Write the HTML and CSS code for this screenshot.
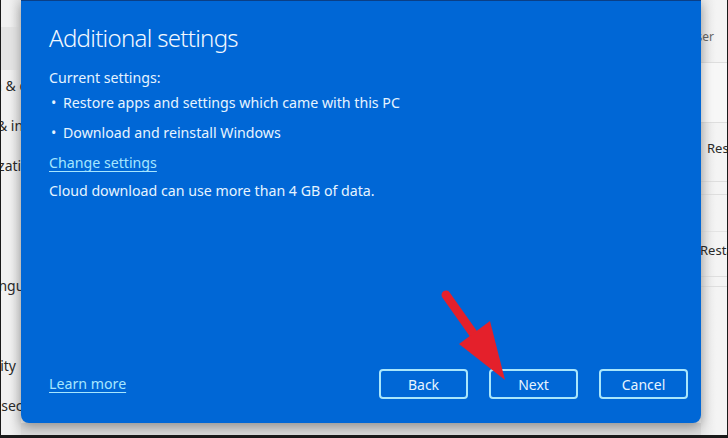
FILE: index.html
```html
<!DOCTYPE html>
<html>
<head>
    <link rel="stylesheet" href="styles.css">
</head>
<body>
    <div class="screen">
        <div class="sidebar">
            <div class="nav-list">
                <div class="nav-top"></div>
                <div class="nav-search"></div>
                <div class="nav-item">Bluetooth &amp; devices</div>
                <div class="nav-item">Network &amp; internet</div>
                <div class="nav-item">Personalization</div>
                <div class="nav-item">Apps</div>
                <div class="nav-item">Accounts</div>
                <div class="nav-item">Time &amp; language</div>
                <div class="nav-item">Gaming</div>
                <div class="nav-item">Accessibility</div>
                <div class="nav-item">Privacy &amp; security</div>
            </div>
        </div>

        <div class="dialog">
            <h1 class="dialog-title">Additional settings</h1>
            <p class="line line-first">Current settings:</p>
            <ul class="settings-list">
                <li>Restore apps and settings which came with this PC</li>
                <li>Download and reinstall Windows</li>
            </ul>
            <a class="link change-link" href="#">Change settings</a>
            <p class="line line-note">Cloud download can use more than 4 GB of data.</p>

            <div class="dialog-footer">
                <a class="link" href="#">Learn more</a>
                <div class="footer-buttons">
                    <button class="dlg-btn">Back</button>
                    <button class="dlg-btn">Next</button>
                    <button class="dlg-btn">Cancel</button>
                </div>
            </div>

            <!-- red pointer drawn over the Next button -->
            <svg class="pointer" width="680" height="423" viewBox="21 0 680 423">
                <line x1="446" y1="295" x2="475" y2="336" stroke="#e4202b" stroke-width="9" stroke-linecap="round"/>
                <polygon points="459,344 490,321 505,380" fill="#e4202b"/>
            </svg>
        </div>

        <div class="gutter"></div>

        <div class="page">
            <div class="page-row row-head"><span class="clip-text">Power user</span></div>
            <div class="page-row row-a"></div>
            <div class="page-row row-b"><span class="page-btn">Reset PC</span></div>
            <div class="page-row row-c"></div>
            <div class="page-row row-d"><span class="page-btn restart">Restart now</span></div>
            <div class="page-row row-e"></div>
        </div>
    </div>
</body>
</html>
```

FILE: styles.css
```css
html, body {
    margin: 0;
    padding: 0;
}

body {
    font-family: "Noto Sans", "Open Sans", sans-serif;
    background: #000;
}

.screen {
    width: 728px;
    height: 438px;
    box-sizing: border-box;
    border-left: 1px solid #1a1a1a;
    border-right: 1px solid #1a1a1a;
    border-bottom: 3px solid #1a1a1a;
    background: #f0f0f0;
    display: grid;
    grid-template-columns: 20px 680px 1fr;
    grid-template-rows: 423px 1fr;
    overflow: hidden;
}

/* settings window behind the dialog */
.sidebar {
    grid-row: 1 / 3;
    grid-column: 1;
    overflow: hidden;
    background: linear-gradient(to right, #f1f1f1 40%, #e2e2e2);
}

.nav-list {
    margin-left: -64px;
    width: 200px;
    font-size: 14px;
    color: #2a2a2a;
}

.nav-top {
    height: 27px;
}

.nav-search {
    height: 43px;
    background: #e4e4e4;
}

.nav-item {
    height: 40px;
    line-height: 32px;
    white-space: nowrap;
}

.gutter {
    grid-row: 2;
    grid-column: 2;
    background: #dcdcdc;
}

.page {
    grid-row: 1 / 3;
    grid-column: 3;
    overflow: hidden;
    background: linear-gradient(to right, #e6e6e6, #f4f4f4 60%);
    font-size: 13px;
    color: #2a2a2a;
}

.page-row {
    box-sizing: border-box;
    border-bottom: 1px solid #dedede;
    display: flex;
    align-items: center;
    white-space: nowrap;
}

.row-head {
    height: 63px;
    justify-content: flex-end;
    align-items: flex-start;
    padding-top: 28px;
    padding-right: 13px;
    color: #666;
    font-size: 12px;
}

.row-a {
    height: 60px;
    background: #f7f7f7;
}

.row-b {
    height: 59px;
    padding-left: 6px;
    padding-bottom: 8px;
}

.row-c {
    height: 38px;
    margin-top: 12px;
    border-top: 1px solid #dedede;
    border-bottom: 1px solid #e4e4e4;
}

.row-d {
    height: 45px;
    padding-bottom: 8px;
}

.row-e {
    height: 10px;
}

.page-btn.restart {
    margin-left: -1px;
}

/* dialog */
.dialog {
    grid-row: 1;
    grid-column: 2;
    position: relative;
    background: #0067d6;
    border-top: 1px solid #0a3f86;
    border-radius: 0 0 8px 8px;
    box-shadow: 0 4px 12px rgba(0, 0, 0, 0.35);
    box-sizing: border-box;
    padding: 19px 13px 24px 28px;
    display: flex;
    flex-direction: column;
    color: #e6f4ff;
    font-size: 14.2px;
    z-index: 1;
}

.dialog-title {
    margin: 0;
    font-size: 24px;
    font-weight: 300;
    letter-spacing: -0.7px;
    line-height: 36px;
    color: #f2f8ff;
}

.line {
    margin: 0;
    line-height: 20px;
}

.line-first {
    margin-top: 12px;
}

.settings-list {
    list-style: none;
    margin: 5px 0 0;
    padding: 0;
}

.settings-list li {
    line-height: 20px;
    margin-bottom: 10px;
    padding-left: 14px;
    position: relative;
}

.settings-list li::before {
    content: "\2022";
    position: absolute;
    left: 2px;
}

.link {
    color: #a6e6ff;
    text-decoration: underline;
    text-underline-offset: 3px;
    line-height: 20px;
}

.change-link {
    align-self: flex-start;
}

.line-note {
    margin-top: 8px;
}

.dialog-footer {
    margin-top: auto;
    display: flex;
    align-items: center;
    justify-content: space-between;
}

.footer-buttons {
    display: flex;
    gap: 21px;
}

.dlg-btn {
    width: 89px;
    height: 30px;
    background: transparent;
    border: 2px solid #a9e6fb;
    border-radius: 4px;
    color: #e6f4ff;
    font-family: inherit;
    font-size: 14px;
    padding: 0;
}

.pointer {
    position: absolute;
    top: -1px;
    left: 0;
    pointer-events: none;
}
```
